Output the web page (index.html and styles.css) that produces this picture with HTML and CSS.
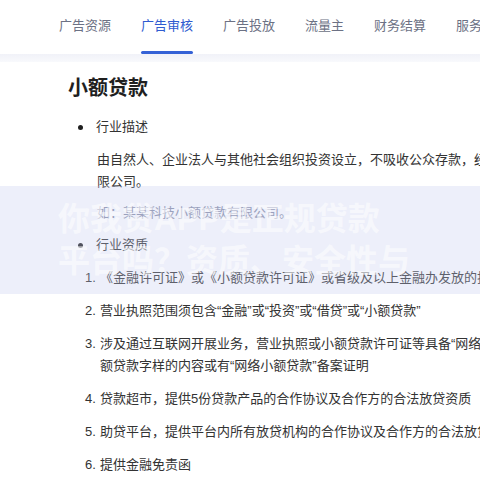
FILE: index.html
```html
<!DOCTYPE html>
<html lang="zh-CN">
<head>
<meta charset="utf-8">
<title>小额贷款</title>
<link rel="stylesheet" href="styles.css">
</head>
<body>
<div class="page">
  <nav class="tabs">
    <span class="tab">广告资源</span>
    <span class="tab active">广告审核</span>
    <span class="tab">广告投放</span>
    <span class="tab">流量主</span>
    <span class="tab">财务结算</span>
    <span class="tab">服务商</span>
  </nav>
  <div class="strip"></div>
  <main class="content">
    <h1 class="title">小额贷款</h1>
    <div class="bullet-item first"><span class="dot"></span><span>行业描述</span></div>
    <p class="para">由自然人、企业法人与其他社会组织投资设立，不吸收公众存款，经营小额贷款业务的有限责任公司或股份有<br>限公司。</p>
    <p class="para faded">如：某某科技小额贷款有限公司。</p>
    <div class="bullet-item"><span class="dot"></span><span>行业资质</span></div>
    <ol class="nums">
      <li class="num-item"><span class="num">1.</span><span class="txt">《金融许可证》或《小额贷款许可证》或省级及以上金融办发放的批准文件</span></li>
      <li class="num-item"><span class="num">2.</span><span class="txt">营业执照范围须包含“金融”或“投资”或“借贷”或“小额贷款”</span></li>
      <li class="num-item"><span class="num">3.</span><span class="txt">涉及通过互联网开展业务，营业执照或小额贷款许可证等具备“网络小<br>额贷款字样的内容或有“网络小额贷款”备案证明</span></li>
      <li class="num-item"><span class="num">4.</span><span class="txt">贷款超市，提供5份贷款产品的合作协议及合作方的合法放贷资质</span></li>
      <li class="num-item"><span class="num">5.</span><span class="txt">助贷平台，提供平台内所有放贷机构的合作协议及合作方的合法放贷资质</span></li>
      <li class="num-item"><span class="num">6.</span><span class="txt">提供金融免责函</span></li>
    </ol>
  </main>
  <div class="banner">
    <div class="banner-text">你我贷APP是正规贷款<br>平台吗？资质、安全性与</div>
  </div>
</div>
</body>
</html>
```

FILE: styles.css
```css
html, body {
  margin: 0;
  padding: 0;
  background: #ffffff;
}
body {
  width: 480px;
  height: 480px;
  overflow: hidden;
  font-family: "Liberation Sans", "Noto Sans CJK SC", sans-serif;
  color: #333333;
}
.page {
  position: relative;
  width: 480px;
  height: 480px;
  overflow: hidden;
}
.tabs {
  display: flex;
  gap: 30px;
  height: 54px;
  padding-left: 59px;
  white-space: nowrap;
}
.tab {
  position: relative;
  display: flex;
  align-items: center;
  padding-bottom: 6px;
  font-size: 13px;
  color: #6c7184;
}
.tab.active {
  color: #2f5bd0;
}
.tab.active::after {
  content: "";
  position: absolute;
  left: 0;
  right: 0;
  bottom: 0;
  height: 3px;
  border-radius: 2px;
  background: #3562d6;
}
.strip {
  height: 8px;
  background: linear-gradient(#f1f2f8, #f8f9fc);
}
.content {
  padding-left: 68px;
  white-space: nowrap;
}
.title {
  margin: 12px 0 0;
  font-size: 20px;
  line-height: 28px;
  font-weight: 700;
  color: #1f1f1f;
}
.bullet-item {
  display: flex;
  align-items: center;
  gap: 13px;
  margin-top: 10px;
  padding-left: 10px;
  font-size: 13px;
  line-height: 22px;
  color: #333333;
}
.bullet-item.first {
  margin-top: 14px;
}
.dot {
  width: 5px;
  height: 5px;
  border-radius: 50%;
  background: #1f1f1f;
}
.para {
  margin: 11px 0 0;
  padding-left: 29px;
  font-size: 13px;
  line-height: 22px;
  color: #333333;
}
.para.faded {
  margin-top: 9px;
  color: #8a90a8;
}
.nums {
  list-style: none;
  margin: 0;
  padding: 0 0 0 17px;
}
.num-item {
  display: flex;
  margin-top: 11px;
  font-size: 13px;
  line-height: 22px;
  color: #333333;
}
.num {
  width: 15px;
  flex: none;
}
.banner {
  position: absolute;
  left: 0;
  right: 0;
  top: 186px;
  height: 108px;
  background: rgba(196, 202, 240, 0.3);
  display: flex;
  align-items: center;
}
.banner-text {
  padding-left: 58px;
  font-size: 32px;
  line-height: 42px;
  font-weight: 700;
  color: rgba(255, 255, 255, 0.55);
  white-space: nowrap;
}
```
